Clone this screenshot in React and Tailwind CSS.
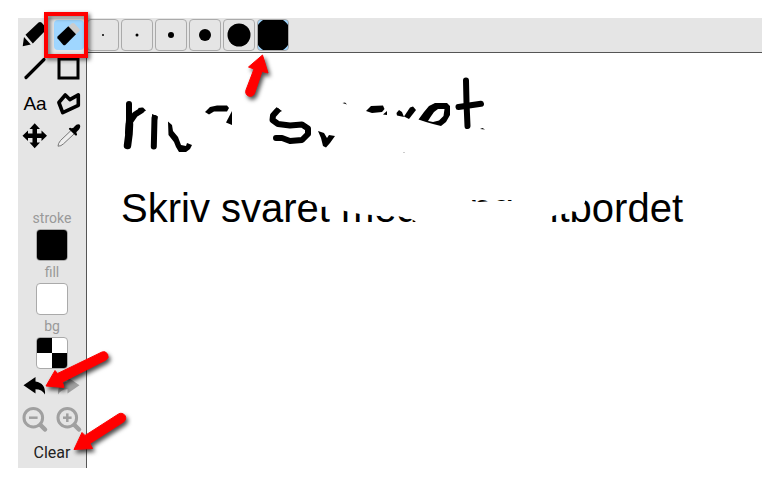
import clsx from "clsx";

const BRUSHES = [
  { size: 1, r: 1 },
  { size: 2, r: 1.5 },
  { size: 5, r: 3 },
  { size: 10, r: 6 },
  { size: 20, r: 11.5 },
  { size: 40, r: 18, selected: true },
];

function Icon({ children }) {
  return (
    <svg viewBox="0 0 34 34" className="size-[34px] shrink-0" aria-hidden="true">
      {children}
    </svg>
  );
}

const TOOLS = [
  {
    name: "Pencil",
    icon: (
      <>
        <path d="M7.500 16.800 20.500 4.600Q22 3.600 23.500 4.600L28 9.500Q28.600 11 27.500 12.500L14.800 25.500Z" />
        <path d="M6 19 12.800 26.500 4.700 28.200Z" />
      </>
    ),
  },
  {
    name: "Eraser",
    selected: true,
    icon: (
      <>
        <path fill="#ccc" d="M16 9 19.500 5.500Q21 4.600 22.500 5.500L27.500 11Q28.200 12 27.500 13L23 17Z" />
        <path d="M16.300 8.300 24 16.200 13.300 27Q12.300 27.600 11.300 27L5.500 20.200Q5 19.200 5.500 18.600Z" />
      </>
    ),
  },
  { name: "Line", icon: <path d="M8 25.500 26 7.500" stroke="#000" strokeWidth="3.200" strokeLinecap="round" /> },
  { name: "Rectangle", icon: <rect x="7" y="7" width="19" height="19" fill="none" stroke="#000" strokeWidth="3" /> },
  { name: "Text", label: "Aa" },
  {
    name: "Polygon",
    icon: (
      <path
        d="M6.900 16.500 13.300 9 17.800 13.600 26.300 8.900 26.300 19.300 10.700 26.700Z"
        fill="none"
        stroke="#000"
        strokeWidth="3.600"
        strokeLinejoin="round"
      />
    ),
  },
  {
    name: "Pan",
    icon: (
      <path d="M16.700 3.300 22 9H19V13.600H23.500V10.500L29 15.800 23.500 21V18H19V22.500H22L16.700 28.200 11.500 22.500H14.500V18H10V21L4.500 15.800 10 10.500V13.600H14.500V9H11.500Z" />
    ),
  },
  {
    name: "Eyedropper",
    icon: (
      <>
        <path d="M19 10.500 8.500 20.500Q6 23.500 6 26.200 9 26.300 11.500 23.800L22 14" fill="#eee" stroke="#777" />
        <path d="M16.800 9Q17.500 7 19.500 8.200 21.500 8.500 22.500 6.500 25 3.500 27.500 4.500 29.200 6.500 27 9.500L24.500 12Q24 13 25 14 25.500 15.800 23.500 15.500Z" />
      </>
    ),
  },
];

function ToolButton({ tool }) {
  return (
    <button
      type="button"
      aria-label={tool.name}
      aria-pressed={Boolean(tool.selected)}
      className={clsx(
        "flex size-[34px] items-center justify-center rounded-md",
        tool.selected && "border-2 border-transparent bg-[#9fd6ff] bg-clip-padding",
      )}
    >
      {tool.label ? (
        <span className="font-['Liberation_Sans',Arial,sans-serif] text-[19px] leading-none">{tool.label}</span>
      ) : (
        <Icon>{tool.icon}</Icon>
      )}
    </button>
  );
}

function ColorWell({ label, children }) {
  return (
    <label className="flex flex-col items-center text-[14px] leading-[22px] text-[#999]">
      {label}
      <button
        type="button"
        aria-label={`${label} color`}
        className="size-8 overflow-hidden rounded border border-[#aaa] bg-white"
      >
        {children}
      </button>
    </label>
  );
}

function UndoShape() {
  return <path d="M5.500 16.300 17.500 8V12.500Q27.800 14 27 25.500 24 20.300 17.500 20.300V24.500Z" />;
}

function Magnifier({ plus }) {
  return (
    <g fill="none" stroke="#a0a0a0">
      <circle cx="15.300" cy="14.700" r="9.300" strokeWidth="3" />
      <path d="M22.500 22 27 26.500" strokeWidth="4.500" strokeLinecap="round" />
      <path d="M11 14.700H19.600" strokeWidth="2.500" />
      {plus && <path d="M15.300 10.400V19" strokeWidth="2.500" />}
    </g>
  );
}

function Sidebar() {
  return (
    <aside className="flex w-[69px] shrink-0 flex-col border-r border-[#555] bg-[#e5e5e5]">
      <div className="grid grid-cols-2">
        {TOOLS.map((tool) => (
          <ToolButton key={tool.name} tool={tool} />
        ))}
      </div>

      <div className="mt-[53px]">
        <ColorWell label="stroke">
          <span className="block size-full bg-black" />
        </ColorWell>
        <ColorWell label="fill" />
        <ColorWell label="bg">
          <span className="grid size-full grid-cols-2">
            <span className="bg-black" />
            <span />
            <span />
            <span className="bg-black" />
          </span>
        </ColorWell>
      </div>

      <div className="grid grid-cols-2">
        <button type="button" aria-label="Undo">
          <Icon>
            <UndoShape />
          </Icon>
        </button>
        <button type="button" aria-label="Redo" disabled>
          <Icon>
            <g transform="matrix(-1 0 0 1 33 0)" fill="#a0a0a0">
              <UndoShape />
            </g>
          </Icon>
        </button>
        <button type="button" aria-label="Zoom out">
          <Icon>
            <Magnifier />
          </Icon>
        </button>
        <button type="button" aria-label="Zoom in">
          <Icon>
            <Magnifier plus />
          </Icon>
        </button>
      </div>

      <button type="button" className="h-[31px] text-[16px] leading-none text-[#222]">
        Clear
      </button>
    </aside>
  );
}

function BrushBar() {
  return (
    <div className="flex gap-0.5 border-b border-[#555] bg-[#e5e5e5] py-px">
      {BRUSHES.map((b) => (
        <button
          key={b.size}
          type="button"
          aria-label={`Brush size ${b.size}`}
          aria-pressed={Boolean(b.selected)}
          className={clsx("size-8 overflow-hidden rounded border border-[#aaa]", b.selected && "bg-[#9fd6ff]")}
        >
          <svg viewBox="0 0 30 30" className="size-full" aria-hidden="true">
            <circle cx="15" cy="15" r={b.r} />
          </svg>
        </button>
      ))}
    </div>
  );
}

// Free canvas: pen strokes and typed text, both partly rubbed out.
function Canvas() {
  return (
    <svg className="w-full grow" role="img" aria-label="Drawing">
      <g transform="translate(-87 -53)">
        <g fill="none" stroke="#000" strokeWidth="6" strokeLinecap="round" strokeLinejoin="round">
          <path d="M129 104V120L128 133" />
          <path d="M129.500 124 129 134 127.500 145.500" strokeWidth="7.500" />
          <path d="M130.500 121 135 114.500 141 110.800" />
          <path d="M154.500 118 153.800 146.500" />
          <path d="M277 111 273 115.500 272.500 120 278 124 290 125.500 302 124.500 308 128.500 308 134 302 140 290 141 282 138 276 138" />
          <path d="M466 80.500 466.500 103 467.500 126" />
          <path d="M458.500 107 469 105.500 481 103.800" />
        </g>
        <path d="M138 108 143 107.500 146 110.500 142 113Z" />
        <path d="M152 114 158 116.500 157 120 152 119Z" />
        <path d="M168 121.500 172 125 173 131 178 137 181 145 186 146 187 143 192 145 190 149 186 152 179 152 176 147 174 142 168.500 135Z" />
        <path d="M205 112 210 107 217 105.500 227 105.500 229 108 227 111.500 214 111.500 209 114.500Z" />
        <path d="M232 111V125L226 122.500Z" />
        <path d="M276 107 282 111 278 113Z" />
        <path d="M318 131 324 133 327 138 329 135 335 136 330 143 326 147.500 323 146 321 138Z" />
        <path d="M342.500 103 345 102.500 347 104.500Z" />
        <path d="M366 111 371 106 383 105.500 384.500 109 382 112 372 113Z" />
        <path d="M383 114.500 387 111V115Z" />
        <path d="M396.500 113 399 110 402 112 404 117 397 115.500Z" />
        <path d="M404 116.500 410 107.500 413 106.500 416 110 409 119Z" />
        <path
          fillRule="evenodd"
          d="M418.500 119.500 424 112 429 106 435 103 447 103 450 106 450 115 446 122 441 126 433 124 426 122ZM428 121 430.500 117 434 112 438 109 444.500 109 443.500 116 439 120.500 433 122Z"
        />
        <path d="M480 129 482.500 128 485 129.500Z" />
        <path fill="#ccc" d="M403 152H405V153H403Z" />
        <g className="font-['Liberation_Sans',Arial,sans-serif]" fontSize="40">
          <text x="121" y="222">
            Skriv svaret med
          </text>
          <text x="683" y="222" textAnchor="end">
            tangentbordet
          </text>
        </g>
        <path
          fill="#fff"
          d="M306 185 308 201 317 203 322 207 332 206 341 210 345 211 360 214 372 215 378 216 397 215.500 401 217 411 219 415 221 426 236H548L550 217 556 215 564 214 571 211 576 212 582 208 585 202 587 185H522L512 201H496L486 201.500 480 202 471 201 465 185Z"
        />
      </g>
    </svg>
  );
}

// Red markers that point out the tools from the text.
function Markers() {
  return (
    <>
      <div className="pointer-events-none absolute left-[44px] top-[12px] h-[46px] w-[44px] border-4 border-[#f00] drop-shadow-[2px_2px_2px_rgba(0,0,0,0.6)]" />
      <svg
        viewBox="0 0 140 477"
        className="pointer-events-none absolute left-0 top-0 h-[477px] w-[140px] overflow-visible drop-shadow-[2px_3px_2px_rgba(0,0,0,0.7)]"
        aria-hidden="true"
      >
        <g fill="#f00" stroke="#f00" strokeLinejoin="round">
          <path d="M262.500 55 248.500 67 254 69 246 90A4.500 4.500 0 0 0 254.500 93.500L262 71.500 268 73Z" />
          <path d="M46 386 55 370.500 57.500 373.500 102 352A4.500 4.500 0 0 1 106 360L62.500 382 64 387.500Z" />
          <path d="M74 449.500 82 432.500 85 435.500 118.500 414A4.500 4.500 0 0 1 123.500 422L90 443.500 92.500 448.500Z" />
        </g>
      </svg>
    </>
  );
}

export default function App() {
  return (
    <div className="relative bg-white pb-[9px] pl-[18px] pr-[10px] pt-[18px] font-[Roboto,sans-serif] text-black">
      <div className="flex">
        <Sidebar />
        <main className="flex min-w-0 grow flex-col">
          <BrushBar />
          <Canvas />
        </main>
      </div>
      <Markers />
    </div>
  );
}
